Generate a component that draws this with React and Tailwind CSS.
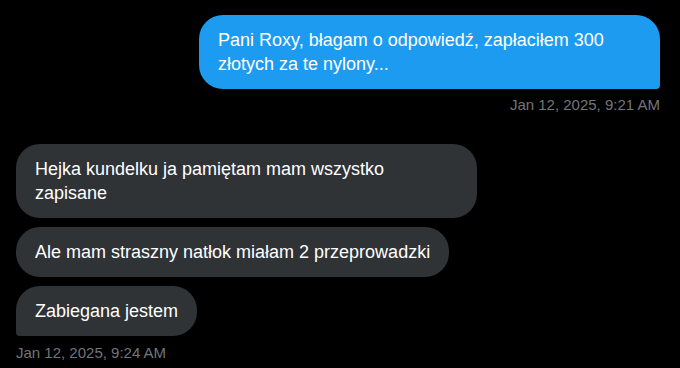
// App.jsx

import React from "react";

const sent = [
  { text: "Pani Roxy, błagam o odpowiedź, zapłaciłem 300 złotych za te nylony...", time: "Jan 12, 2025, 9:21 AM" },
];

const received = [
  "Hejka kundelku ja pamiętam mam wszystko zapisane",
  "Ale mam straszny natłok miałam 2 przeprowadzki",
  "Zabiegana jestem",
];

function App() {
  return (
    <div
      className="h-[368px] w-full bg-black pl-4 pr-5 pt-[15px] overflow-hidden"
      style={{ fontFamily: '"Liberation Sans", Arial, sans-serif' }}
    >
      {/* Outgoing message */}
      <div className="flex flex-col items-end">
        <div className="max-w-[461px] rounded-3xl rounded-br-[4px] bg-[#1d9bf0] px-[19px] py-[13px] text-[18px] leading-6 text-white">
          {sent[0].text}
        </div>
        <div className="mt-2 text-[15px] leading-4 text-[#71767b]">{sent[0].time}</div>
      </div>

      {/* Incoming messages */}
      <div className="mt-[31px] flex flex-col items-start gap-[9px]">
        {received.map((t, i) => (
          <div
            key={i}
            className={`max-w-[461px] rounded-3xl bg-[#2f3336] px-[19px] py-[13px] text-[18px] leading-6 text-white ${
              i === received.length - 1 ? "rounded-bl-[4px]" : ""
            }`}
          >
            {t}
          </div>
        ))}
        <div className="text-[15px] leading-4 text-[#71767b]">Jan 12, 2025, 9:24 AM</div>
      </div>
    </div>
  );
}

export default App;
